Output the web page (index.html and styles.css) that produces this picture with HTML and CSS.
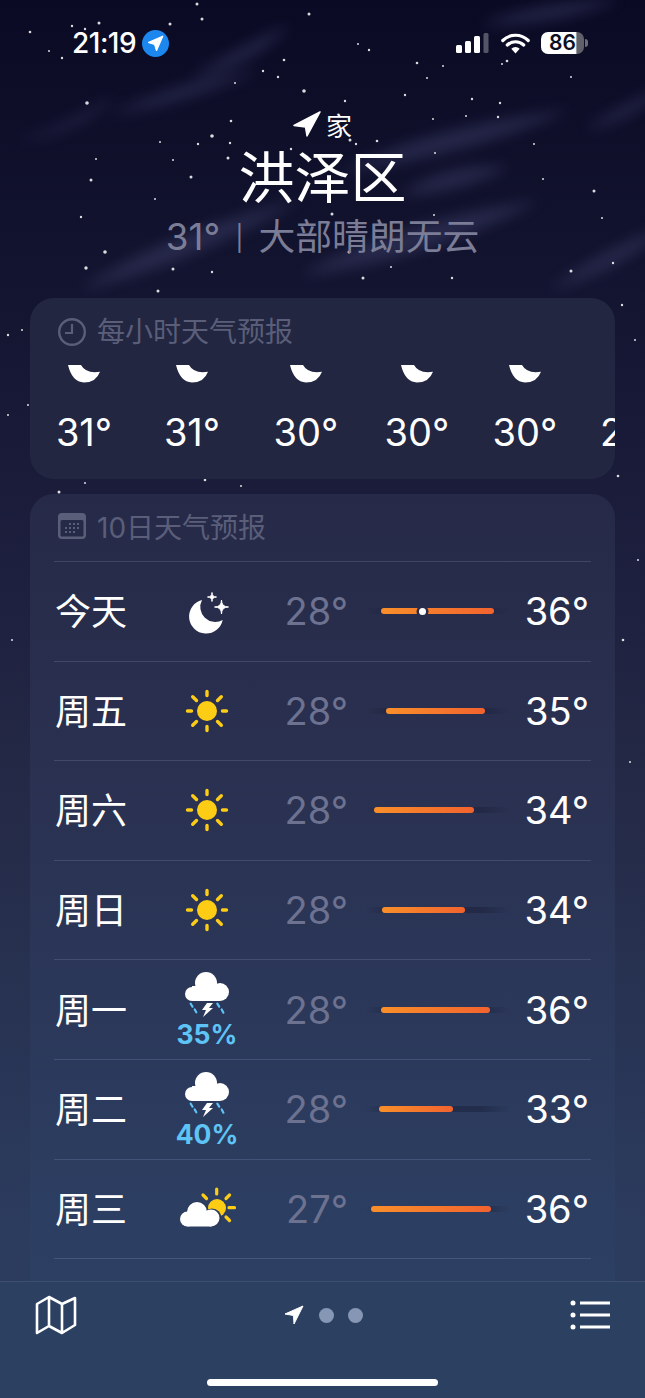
FILE: index.html
```html
<!DOCTYPE html>
<html lang="zh-CN">
<head>
	<meta charset="UTF-8">
	<title>天气</title>
	<link rel="stylesheet" href="styles.css">
</head>
<body>
<svg class="defs" width="0" height="0">
	<symbol id="sun" viewBox="0 0 60 60">
		<circle cx="30" cy="30" r="10" fill="#fdcd15"/>
		<path d="M30 10.500v4M30 45.500v4M10.500 30h4M45.500 30h4M15.700 15.700l3.800 3.800M40.500 40.500l3.800 3.800M44.300 15.700l-3.800 3.800M19.500 40.500l-3.800 3.800" stroke="#fdcd15" stroke-width="3.400" stroke-linecap="round" fill="none"/>
	</symbol>
	<symbol id="moon-stars" viewBox="0 0 60 60">
		<path d="M25 19A17 17 0 1 0 45.700 39A15 15 0 0 1 25 19Z" fill="#fff"/>
		<path d="M44.500 19Q44.500 26 51.500 26Q44.500 26 44.500 33Q44.500 26 37.500 26Q44.500 26 44.500 19Z" fill="#fff" stroke="#fff" stroke-width="1"/>
		<path d="M35 11.500Q35 16 39.500 16Q35 16 35 20.500Q35 16 30.500 16Q35 16 35 11.500Z" fill="#fff" stroke="#fff" stroke-width="1"/>
	</symbol>
	<symbol id="storm" viewBox="0 0 60 46">
		<circle cx="29" cy="11" r="11" fill="#fff"/>
		<circle cx="15" cy="22" r="7" fill="#fff"/>
		<circle cx="43" cy="20" r="9" fill="#fff"/>
		<rect x="15" y="14" width="28" height="15" fill="#fff"/>
		<path d="M30 31h6l-4 5h4l-10 9 3-7h-4z" fill="#fff"/>
		<path d="M13.700 31.700l1.800 3M17.700 37.500l1.600 2.800M40.300 31.700l1.900 3M44.700 37.500l1.700 3.200" stroke="#5ec4f5" stroke-width="2.200" stroke-linecap="round" fill="none"/>
	</symbol>
	<symbol id="sun-cloud" viewBox="0 0 60 60">
		<circle cx="40" cy="29" r="9" fill="#fdcd15"/>
		<path d="M39.700 10v5M26 16l3.500 3.500M52.500 16L49 19.500M52 28.700h5.500M49 38l3.500 3.500" stroke="#fdcd15" stroke-width="3.200" stroke-linecap="round" fill="none"/>
		<circle cx="20" cy="33" r="11" fill="#2b3a5a"/>
		<circle cx="35" cy="39" r="9.500" fill="#2b3a5a"/>
		<circle cx="20" cy="33" r="10" fill="#fff"/>
		<circle cx="10.500" cy="40" r="7.500" fill="#fff"/>
		<circle cx="34" cy="39" r="8.500" fill="#fff"/>
		<rect x="10.500" y="33" width="24" height="14.500" fill="#fff"/>
	</symbol>
	<symbol id="hour-moon" viewBox="0 0 34 18">
		<path d="M1 0H14Q19 9 33 6.700Q29 17.500 17 17.500Q5 17 1 0Z" fill="#fff"/>
	</symbol>
</svg>

<!-- night sky -->
<svg class="sky" width="645" height="1398" viewBox="0 0 645 1398">
	<defs>
		<filter id="soft" x="-10%" y="-10%" width="120%" height="120%"><feGaussianBlur stdDeviation="7"/></filter>
	</defs>
	<g filter="url(#soft)" fill="#5d6096" opacity=".3">
		<path d="M15 142Q70 125 115 95Q85 132 15 142Z"/>
		<path d="M190 78Q240 45 290 25Q255 65 190 78Z"/>
		<path d="M340 172Q430 125 570 110Q470 155 340 172Z"/>
		<path d="M80 290Q170 230 300 200Q200 260 80 290Z"/>
		<path d="M400 195Q450 160 510 168Q450 195 400 195Z"/>
		<path d="M585 130Q620 105 670 85Q630 122 585 130Z"/>
		<path d="M300 275Q400 220 540 200Q430 260 300 275Z"/>
		<path d="M480 25Q540 0 620 0Q560 25 480 25Z"/>
		<path d="M550 290Q600 250 670 225Q620 270 550 290Z"/>
		<path d="M110 115Q180 80 260 70Q180 105 110 115Z"/>
	</g>
	<g fill="#fff" opacity=".85">
		<circle cx="197" cy="4" r="1.500"/><circle cx="309" cy="14" r="1.500"/><circle cx="202" cy="19" r="1.500"/>
		<circle cx="99" cy="23" r="1.500"/><circle cx="170" cy="24" r="1.500"/><circle cx="72" cy="26" r="1.200"/>
		<circle cx="85" cy="29" r="1.200"/><circle cx="30" cy="32" r="1.300"/><circle cx="49" cy="51" r="1"/>
		<circle cx="62" cy="58" r="1.200"/><circle cx="369" cy="50" r="1.200"/><circle cx="358" cy="44" r="1"/>
		<circle cx="284" cy="60" r="1.300"/><circle cx="417" cy="63" r="1.300"/><circle cx="507" cy="61" r="1.300"/>
		<circle cx="502" cy="64" r="1"/><circle cx="443" cy="66" r="1"/><circle cx="263" cy="71" r="1.200"/>
		<circle cx="278" cy="77" r="1.200"/><circle cx="427" cy="78" r="1"/><circle cx="571" cy="77" r="1"/>
		<circle cx="235" cy="83" r="1"/><circle cx="304" cy="91" r="1.800"/><circle cx="405" cy="95" r="1.200"/>
		<circle cx="472" cy="99" r="1.200"/><circle cx="345" cy="101" r="1.200"/><circle cx="87" cy="103" r="1.800"/>
		<circle cx="500" cy="103" r="1.200"/><circle cx="498" cy="117" r="1.200"/><circle cx="466" cy="116" r="1"/>
		<circle cx="433" cy="119" r="1"/><circle cx="231" cy="121" r="1.300"/><circle cx="212" cy="136" r="1.800"/>
		<circle cx="198" cy="144" r="1.200"/><circle cx="230" cy="143" r="1.200"/><circle cx="160" cy="142" r="1"/>
		<circle cx="377" cy="141" r="1.300"/><circle cx="350" cy="140" r="1.500"/><circle cx="356" cy="144" r="1.200"/>
		<circle cx="534" cy="144" r="1"/><circle cx="291" cy="149" r="1.200"/><circle cx="228" cy="158" r="1.500"/>
		<circle cx="173" cy="160" r="1"/><circle cx="96" cy="159" r="1"/><circle cx="435" cy="153" r="1"/>
		<circle cx="191" cy="177" r="1.500"/><circle cx="91" cy="180" r="1.500"/><circle cx="543" cy="179" r="1"/>
		<circle cx="594" cy="191" r="1.500"/><circle cx="155" cy="199" r="1"/><circle cx="81" cy="217" r="1.200"/>
		<circle cx="332" cy="214" r="1.500"/><circle cx="434" cy="215" r="1"/><circle cx="602" cy="218" r="1"/>
		<circle cx="105" cy="252" r="1.800"/><circle cx="349" cy="252" r="1.500"/><circle cx="86" cy="268" r="1.700"/>
		<circle cx="173" cy="269" r="1.500"/><circle cx="212" cy="272" r="1.200"/><circle cx="391" cy="267" r="1"/>
		<circle cx="571" cy="271" r="1.500"/><circle cx="613" cy="263" r="1.200"/><circle cx="363" cy="278" r="1.500"/>
		<circle cx="452" cy="278" r="1.200"/><circle cx="158" cy="291" r="1.500"/><circle cx="28" cy="405" r="1"/>
		<circle cx="85" cy="483" r="1"/><circle cx="205" cy="480" r="1.300"/><circle cx="59" cy="492" r="1.500"/>
		<circle cx="241" cy="486" r="1"/><circle cx="618" cy="476" r="1.300"/><circle cx="623" cy="640" r="1.300"/>
		<circle cx="630" cy="762" r="1"/><circle cx="8" cy="415" r="1"/><circle cx="622" cy="305" r="1.200"/>
		<circle cx="22" cy="330" r="1"/><circle cx="8" cy="335" r="1.200"/><circle cx="635" cy="340" r="1"/>
		<circle cx="12" cy="640" r="1"/><circle cx="638" cy="560" r="1"/>
	</g>
</svg>

<main class="main">
	<div class="status">
		<div class="clock">
			<span>21:19</span>
			<svg class="loc-badge" width="27" height="27" viewBox="0 0 27 27">
				<circle cx="13.500" cy="13.500" r="13.500" fill="#1c87ee"/>
				<path d="M21 6L6 12.500L12.500 14.500L14.500 21Z" fill="#fff" stroke="#fff" stroke-linejoin="round"/>
			</svg>
		</div>
		<div class="indicators">
			<svg width="33" height="20" viewBox="0 0 33 20">
				<rect x="0" y="12" width="6" height="8" rx="1.500" fill="#fff"/>
				<rect x="9" y="8" width="6" height="12" rx="1.500" fill="#fff"/>
				<rect x="18" y="3" width="6" height="17" rx="1.500" fill="#fff"/>
				<rect x="27.500" y="0" width="5" height="20" rx="1.500" fill="#fff" opacity=".3"/>
			</svg>
			<svg width="29" height="21" viewBox="0 0 29 21">
				<path d="M1.800 7.500A18 18 0 0 1 27.200 7.500M6.300 12A12 12 0 0 1 22.700 12" stroke="#fff" stroke-width="3.200" stroke-linecap="round" fill="none"/>
				<path d="M10.300 15.800A6 6 0 0 1 18.700 15.800L14.500 20.500Z" fill="#fff"/>
			</svg>
			<div class="battery"><span class="battery-body">86</span><span class="battery-cap"></span></div>
		</div>
	</div>

	<header class="hero">
		<div class="place">
			<svg width="28" height="26" viewBox="0 0 28 26">
				<path d="M27 1L1 14.500L12.500 16L14 25Z" fill="#fff" stroke="#fff" stroke-width="1.500" stroke-linejoin="round"/>
			</svg>
			<span>家</span>
		</div>
		<h1>洪泽区</h1>
		<p>31°<span class="sep">|</span>大部晴朗无云</p>
	</header>

	<section class="card hourly">
		<div class="card-title">
			<svg class="title-icon" width="28" height="28" viewBox="0 0 28 28">
				<circle cx="14" cy="14" r="12.800" fill="none" stroke="#5a5e79" stroke-width="2.400"/>
				<path d="M14 6v9H7" fill="none" stroke="#5a5e79" stroke-width="2.200"/>
			</svg>
			<span>每小时天气预报</span>
		</div>
		<div class="hours">
			<div class="hour"><svg width="34" height="18"><use href="#hour-moon"/></svg><span>31°</span></div>
			<div class="hour"><svg width="34" height="18"><use href="#hour-moon"/></svg><span>31°</span></div>
			<div class="hour"><svg width="34" height="18"><use href="#hour-moon"/></svg><span>30°</span></div>
			<div class="hour"><svg width="34" height="18"><use href="#hour-moon"/></svg><span>30°</span></div>
			<div class="hour"><svg width="34" height="18"><use href="#hour-moon"/></svg><span>30°</span></div>
			<div class="hour"><svg width="34" height="18"><use href="#hour-moon"/></svg><span>29°</span></div>
		</div>
	</section>

	<section class="card daily">
		<div class="card-title">
			<svg class="title-icon" width="28" height="26" viewBox="0 0 28 26">
				<rect width="28" height="26" rx="4" fill="#5a5e79"/>
				<rect x="2.500" y="7" width="23" height="16.500" rx="1.500" fill="#252a46"/>
				<g fill="#5a5e79">
					<rect x="11" y="10" width="2" height="2"/><rect x="15" y="10" width="2" height="2"/><rect x="19" y="10" width="2" height="2"/>
					<rect x="7" y="14" width="2" height="2"/><rect x="11" y="14" width="2" height="2"/><rect x="15" y="14" width="2" height="2"/><rect x="19" y="14" width="2" height="2"/>
					<rect x="7" y="18" width="2" height="2"/><rect x="11" y="18" width="2" height="2"/><rect x="15" y="18" width="2" height="2"/>
				</g>
			</svg>
			<span>10日天气预报</span>
		</div>

		<div class="day">
			<span class="day-name">今天</span>
			<div class="day-icon"><svg width="60" height="60"><use href="#moon-stars"/></svg></div>
			<span class="low">28°</span>
			<div class="track"><div class="fill" style="margin-left:16px;width:113px"><i class="now" style="left:38px"></i></div></div>
			<span class="high">36°</span>
		</div>
		<div class="day">
			<span class="day-name">周五</span>
			<div class="day-icon"><svg width="60" height="60"><use href="#sun"/></svg></div>
			<span class="low">28°</span>
			<div class="track"><div class="fill" style="margin-left:21px;width:99px"></div></div>
			<span class="high">35°</span>
		</div>
		<div class="day">
			<span class="day-name">周六</span>
			<div class="day-icon"><svg width="60" height="60"><use href="#sun"/></svg></div>
			<span class="low">28°</span>
			<div class="track"><div class="fill" style="margin-left:9px;width:100px"></div></div>
			<span class="high">34°</span>
		</div>
		<div class="day">
			<span class="day-name">周日</span>
			<div class="day-icon"><svg width="60" height="60"><use href="#sun"/></svg></div>
			<span class="low">28°</span>
			<div class="track"><div class="fill" style="margin-left:17px;width:83px"></div></div>
			<span class="high">34°</span>
		</div>
		<div class="day">
			<span class="day-name">周一</span>
			<div class="day-icon"><svg width="60" height="46"><use href="#storm"/></svg><span class="chance">35%</span></div>
			<span class="low">28°</span>
			<div class="track"><div class="fill" style="margin-left:16px;width:109px"></div></div>
			<span class="high">36°</span>
		</div>
		<div class="day">
			<span class="day-name">周二</span>
			<div class="day-icon"><svg width="60" height="46"><use href="#storm"/></svg><span class="chance">40%</span></div>
			<span class="low">28°</span>
			<div class="track"><div class="fill" style="margin-left:14px;width:74px"></div></div>
			<span class="high">33°</span>
		</div>
		<div class="day">
			<span class="day-name">周三</span>
			<div class="day-icon"><svg width="60" height="60"><use href="#sun-cloud"/></svg></div>
			<span class="low">27°</span>
			<div class="track"><div class="fill" style="margin-left:6px;width:120px"></div></div>
			<span class="high">36°</span>
		</div>
		<div class="day"></div>
	</section>
</main>

<footer class="toolbar">
	<div class="tools">
		<svg width="42" height="40" viewBox="0 0 42 40">
			<path d="M2 9L14 2L27 9L40 3V30L27 38L14 31L2 38ZM14 2V31M27 9V38" fill="none" stroke="#fff" stroke-width="2.600" stroke-linejoin="round"/>
		</svg>
		<div class="pager">
			<svg width="20" height="20" viewBox="0 0 20 20">
				<path d="M19 1L1 9L9.500 10.500L10 19Z" fill="#fff" stroke="#fff" stroke-linejoin="round"/>
			</svg>
			<span class="dot"></span>
			<span class="dot"></span>
		</div>
		<svg width="40" height="30" viewBox="0 0 40 30">
			<g fill="#fff"><circle cx="3" cy="3" r="2.500"/><circle cx="3" cy="15" r="2.500"/><circle cx="3" cy="27" r="2.500"/></g>
			<path d="M10 3H40M10 15H40M10 27H40" stroke="#fff" stroke-width="3"/>
		</svg>
	</div>
	<div class="home-bar"></div>
</footer>
</body>
</html>
```
FILE: styles.css
```css
html,body,h1,p{margin:0;padding:0}
body{
	position:relative;
	display:flex;
	flex-direction:column;
	width:645px;
	height:1398px;
	overflow:hidden;
	color:#fff;
	font-family:Inter,"Noto Sans CJK SC",sans-serif;
	background:linear-gradient(180deg,#0a0a24 0,#12132e 250px,#1a1c3a 490px,#232845 760px,#2c3c5e 1230px);
}
.defs{position:absolute}
.sky{position:absolute;left:0;top:0}

.main{
	position:relative;
	flex:1;
	min-height:0;
	overflow:hidden;
}

/* status bar */
.status{
	display:flex;
	justify-content:space-between;
	height:109px;
	padding:30px 57px 0 72px;
	box-sizing:border-box;
}
.clock{
	display:flex;
	align-items:flex-start;
	gap:6px;
	font-size:28px;
	font-weight:500;
	line-height:27px;
	letter-spacing:-.5px;
}
.indicators{
	display:flex;
	align-items:flex-start;
	padding-top:3px;
	gap:12px;
}
.battery{
	display:flex;
	align-items:center;
	margin:-1px 0 0 -1px;
}
.battery-body{
	width:43px;
	height:22px;
	border-radius:7px;
	background:linear-gradient(90deg,#fff 0,#fff 80%,#5f6068 84%);
	color:#0d0e22;
	font-size:21px;
	font-weight:600;
	line-height:22px;
	text-align:center;
}
.battery-cap{
	width:3px;
	height:8px;
	margin-left:1px;
	border-radius:0 3px 3px 0;
	background:#6b6c78;
}

/* place */
.hero{
	position:relative;
	text-align:center;
	height:189px;
}
.place{
	display:flex;
	justify-content:center;
	align-items:center;
	gap:5px;
	height:30px;
	font-size:26px;
}
.hero h1{
	margin-top:9px;
	font-size:56px;
	font-weight:400;
	line-height:60px;
}
.hero p{
	margin-top:9px;
	color:#7b7d97;
	font-size:36.800px;
	line-height:40px;
}
.sep{
	margin:0 15px;
	font-size:25px;
	vertical-align:3px;
}

/* cards */
.card{
	position:relative;
	margin:0 30px;
	border-radius:24px;
	overflow:hidden;
}
.hourly{
	height:181px;
	margin-bottom:15px;
	background:#222641;
}
.card-title{
	display:flex;
	align-items:center;
	gap:11px;
	height:63px;
	margin-bottom:4px;
	padding:0 0 0 28px;
	box-sizing:border-box;
	color:#5a5e79;
	font-size:28px;
}
.hourly .card-title{height:67px;margin:0}
.hourly .card-title span{margin-top:-4px}
.hours{
	display:grid;
	grid-template-columns:108px 108px 120px 102px 114px 100px;
	height:114px;
	overflow:hidden;
}
.hour{
	display:flex;
	flex-direction:column;
	align-items:center;
}
.hour span{
	margin-top:27px;
	font-size:38px;
	line-height:44px;
}

/* ten days */
.daily{
	height:1000px;
	background:linear-gradient(180deg,#262a48 0,#2a3050 266px,#2c4064 786px);
}
.day{
	display:grid;
	grid-template-columns:120px 66px 108px 162px 81px;
	align-items:center;
	height:99.600px;
	margin:0 24px;
	box-sizing:border-box;
	border-top:1px solid rgba(150,165,205,.22);
}
.day-name{
	margin-top:-4px;
	padding-left:1px;
	font-size:36px;
}
.day-icon{
	display:flex;
	flex-direction:column;
	align-items:center;
}
.chance{
	margin-top:3px;
	color:#5ec4f5;
	font-size:26.500px;
	font-weight:700;
	line-height:26px;
}
.low,.high{
	font-size:38px;
	text-align:right;
}
.low{color:#6c7290}
.high{padding-right:2px}
.track{
	width:145px;
	height:6px;
	margin-left:17px;
	border-radius:3px;
	background:linear-gradient(90deg,transparent,rgba(24,28,54,.45) 20%,rgba(24,28,54,.45) 80%,transparent);
}
.fill{
	position:relative;
	height:6px;
	border-radius:3px;
	background:linear-gradient(90deg,#f98f2a,#f2632f);
}
.now{
	position:absolute;
	top:-.5px;
	width:7px;
	height:7px;
	border-radius:50%;
	background:#fff;
	box-shadow:0 0 0 2.500px #282d4c;
}

/* bottom bar */
.toolbar{
	position:relative;
	height:117px;
	box-sizing:border-box;
	border-top:1px solid #3c4f70;
	background:#2c4061;
}
.tools{
	display:flex;
	justify-content:space-between;
	align-items:center;
	height:40px;
	padding:13px 35px 0;
}
.pager{
	display:flex;
	align-items:center;
	gap:15px;
	margin-right:1px;
}
.dot{
	width:15px;
	height:15px;
	border-radius:50%;
	background:#8597b4;
}
.pager .dot:last-child{margin-left:-1px}
.home-bar{
	width:231px;
	height:7px;
	margin:44px auto 0;
	border-radius:4px;
	background:#fff;
}
```
